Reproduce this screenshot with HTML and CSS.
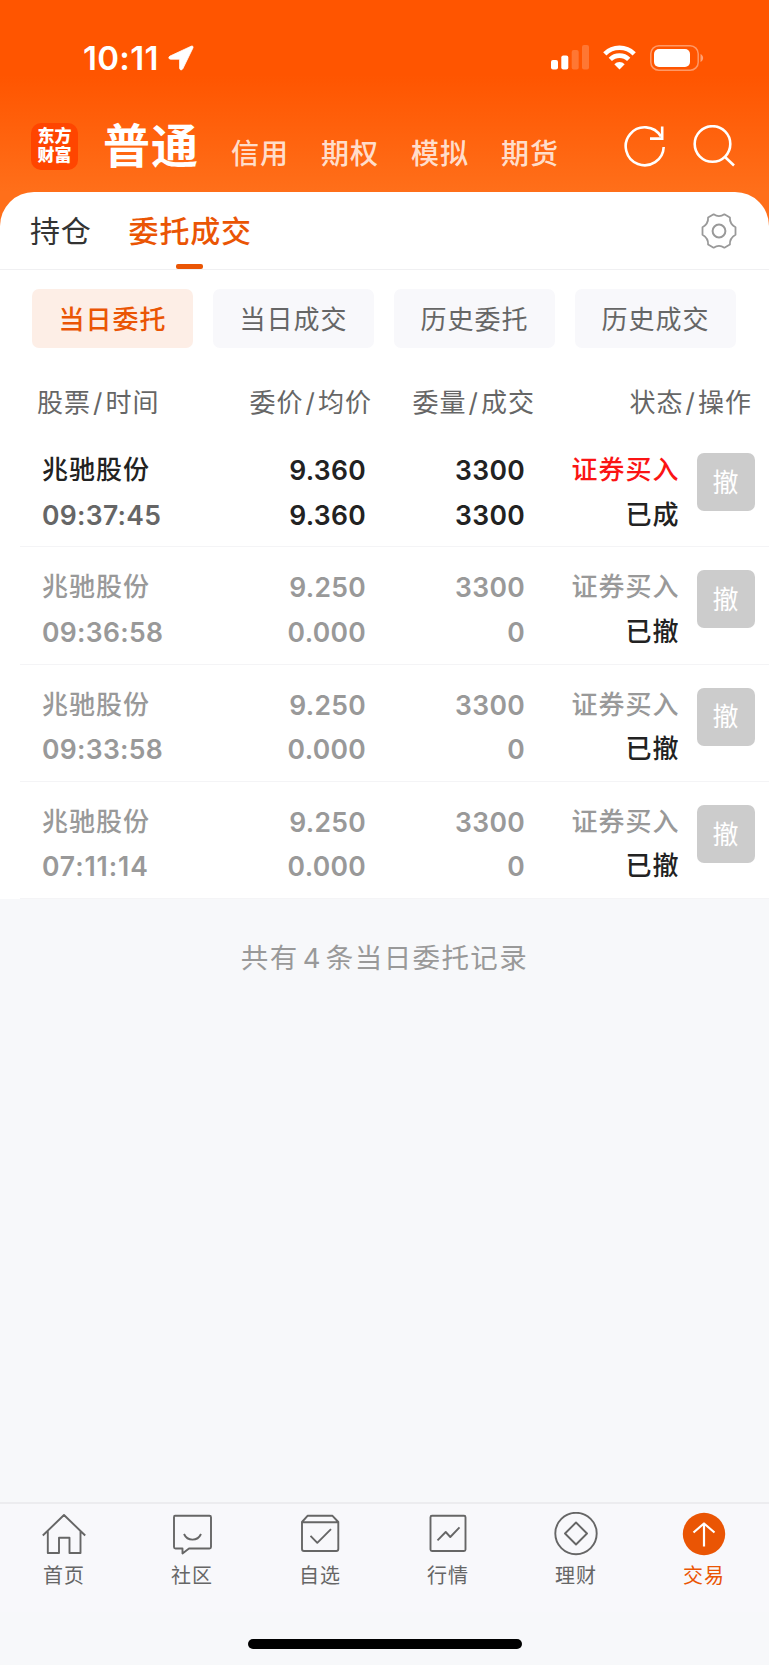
FILE: index.html
```html
<!DOCTYPE html>
<html lang="zh-CN">
<head>
    <meta charset="UTF-8">
    <meta name="viewport" content="width=device-width, initial-scale=1.0">
    <title>委托成交</title>
    <link rel="stylesheet" href="styles.css">
</head>
<body>
    <div class="app">
        <div class="top">
            <div class="status-bar">
                <span class="time">10:11</span>
                <svg class="location" width="26" height="26" viewBox="0 0 26 26"><path d="M23.2 1.2 2 11.1C.2 12 .6 14.200 2.500 14.200H11.600V23C11.600 25.200 14 25.500 14.800 23.800L24.900 3C25.500 1.500 24.600.6 23.200 1.200Z" fill="#fff" stroke="#fff" stroke-width=".8"/></svg>
                <div class="signals">
                    <svg width="38" height="25" viewBox="0 0 38 25" fill="#fff">
                        <rect x="0" y="15" width="7" height="9.500" rx="2"/>
                        <rect x="10.300" y="10.500" width="7" height="14" rx="2"/>
                        <rect x="20.700" y="5" width="7" height="19.500" rx="2" opacity=".2"/>
                        <rect x="31" y="0" width="7" height="24.500" rx="2" opacity=".2"/>
                    </svg>
                    <svg width="33" height="25" viewBox="0 0 33 25" fill="none" stroke="#fff" stroke-width="4.600">
                        <path d="M1.800 8.800A21 21 0 0 1 31.200 8.800"/>
                        <path d="M7.300 14.400A13 13 0 0 1 25.700 14.400"/>
                        <path d="M16.500 24.500 11.300 19.200A7.500 7.500 0 0 1 21.700 19.200Z" fill="#fff" stroke="none"/>
                    </svg>
                    <svg width="54" height="26" viewBox="0 0 54 26">
                        <rect x=".8" y=".8" width="47.400" height="24.400" rx="8" fill="none" stroke="#fff" stroke-width="1.500" opacity=".4"/>
                        <rect x="4" y="4" width="36" height="18" rx="5" fill="#fff"/>
                        <path d="M50.500 9C54 10.500 54 15.500 50.500 17Z" fill="#fff" opacity=".45"/>
                    </svg>
                </div>
            </div>
            <div class="account-bar">
                <div class="logo">东方<br>财富</div>
                <h1>普通</h1>
                <div class="accounts">
                    <span>信用</span>
                    <span>期权</span>
                    <span>模拟</span>
                    <span>期货</span>
                </div>
                <svg class="refresh" width="42" height="42" viewBox="0 0 42 42" fill="none" stroke="#fff" stroke-width="2.600">
                    <path d="M39.700 22A19 19 0 1 1 37 11.500"/>
                    <path d="M38.200 1.500V13.600H26"/>
                </svg>
                <svg class="search" width="42" height="42" viewBox="0 0 42 42" fill="none" stroke="#fff" stroke-width="2.600">
                    <circle cx="19.500" cy="19" r="17.800"/>
                    <path d="M31.500 31.500 41 40.500"/>
                </svg>
            </div>
        </div>

        <div class="sheet">
            <div class="tabs">
                <div class="tab">持仓</div>
                <div class="tab active">委托成交</div>
                <svg class="gear" width="36" height="36" viewBox="0 0 36 36" fill="none" stroke="#999" stroke-width="1.800" stroke-linejoin="round">
                    <path d="M12.600 1.300Q18 4.900 23.400 1.300L28.900 4.500Q28.500 10.800 34.500 14.300V21.700Q28.500 25.200 28.900 31.500L23.400 34.700Q18 31.100 12.600 34.700L7.100 31.500Q7.500 25.200 1.500 21.700V14.300Q7.500 10.800 7.100 4.500Z"/>
                    <circle cx="18" cy="18" r="6.400" stroke-width="2"/>
                </svg>
            </div>

            <div class="filters">
                <div class="filter active">当日委托</div>
                <div class="filter">当日成交</div>
                <div class="filter">历史委托</div>
                <div class="filter">历史成交</div>
            </div>

            <div class="list-header">
                <span>股票<i>/</i>时间</span>
                <span>委价<i>/</i>均价</span>
                <span>委量<i>/</i>成交</span>
                <span>状态<i>/</i>操作</span>
            </div>

            <div class="order done">
                <div class="name">兆驰股份<br><span class="num">09:37:45</span></div>
                <div class="num">9.360<br>9.360</div>
                <div class="num">3300<br>3300</div>
                <div class="state">证券买入<br><b>已成</b></div>
                <button class="cancel">撤</button>
            </div>
            <div class="order">
                <div class="name">兆驰股份<br><span class="num">09:36:58</span></div>
                <div class="num">9.250<br>0.000</div>
                <div class="num">3300<br>0</div>
                <div class="state">证券买入<br><b>已撤</b></div>
                <button class="cancel">撤</button>
            </div>
            <div class="order">
                <div class="name">兆驰股份<br><span class="num">09:33:58</span></div>
                <div class="num">9.250<br>0.000</div>
                <div class="num">3300<br>0</div>
                <div class="state">证券买入<br><b>已撤</b></div>
                <button class="cancel">撤</button>
            </div>
            <div class="order">
                <div class="name">兆驰股份<br><span class="num time-wide">07:11:14</span></div>
                <div class="num">9.250<br>0.000</div>
                <div class="num">3300<br>0</div>
                <div class="state">证券买入<br><b>已撤</b></div>
                <button class="cancel">撤</button>
            </div>
        </div>

        <p class="total">共有<span>4</span>条当日委托记录</p>

        <div class="nav">
            <div class="nav-item">
                <svg width="44" height="44" viewBox="0 0 44 44"><path d="M.8 23.500 22 3 43.200 23.500M5.800 19V41H17V25.700H27.500V41H38.500V19"/></svg>
                <span>首页</span>
            </div>
            <div class="nav-item">
                <svg width="44" height="44" viewBox="0 0 44 44"><path d="M5 3.800H39.500Q41 3.800 41 5.300V35Q41 36.500 39.500 36.500H19L12.500 41.500V36.500H5.500Q4 36.500 4 35V5.300Q4 3.800 5 3.800ZM14 22C17.500 29.500 27.500 29.500 31 22"/></svg>
                <span>社区</span>
            </div>
            <div class="nav-item">
                <svg width="44" height="44" viewBox="0 0 44 44"><path d="M9.500 3.800H34.500L40.300 10V37Q40.300 39 38.300 39H6Q4 39 4 37V10ZM4 10.300H40.300M12.500 23.800 19.300 30.800 33 17.200"/></svg>
                <span>自选</span>
            </div>
            <div class="nav-item">
                <svg width="44" height="44" viewBox="0 0 44 44"><rect x="4.500" y="3.800" width="35" height="35.200" rx="1.500"/><path d="M11.500 28.300 19.700 20 24.300 25 33.500 15.300"/></svg>
                <span>行情</span>
            </div>
            <div class="nav-item">
                <svg width="44" height="44" viewBox="0 0 44 44"><circle cx="22" cy="21.500" r="20.700"/><path d="M22 10.500 33 21.500 22 32.500 11 21.500Z"/></svg>
                <span>理财</span>
            </div>
            <div class="nav-item active">
                <svg width="44" height="44" viewBox="0 0 44 44"><circle class="fill" cx="22" cy="22" r="21.200"/><path d="M22 34.500V11.500M11.500 20.500 22 11.500 32.500 20.500"/></svg>
                <span>交易</span>
            </div>
        </div>
        <div class="home-indicator"></div>
    </div>
</body>
</html>
```
FILE: styles.css
```css
* {
    box-sizing: border-box;
}
body {
    margin: 0;
    font-family: Inter, 'Noto Sans CJK SC', sans-serif;
    background: #f7f8fa;
    color: #222;
}
.app {
    width: 769px;
    height: 1665px;
    display: flex;
    flex-direction: column;
    overflow: hidden;
}
.top {
    height: 232px;
    flex-shrink: 0;
    background: linear-gradient(#ff5500 0, #ff5500 75px, #ff6f1a 192px);
    color: #fff;
}
.status-bar {
    height: 115px;
    padding: 0 65px 0 83px;
    display: flex;
    align-items: center;
}
.time {
    font-size: 33px;
    font-weight: 600;
    letter-spacing: 0.3px;
}
.location {
    margin-left: 9px;
}
.signals {
    margin-left: auto;
    display: flex;
    align-items: center;
    gap: 14px;
}
.account-bar {
    height: 62px;
    padding: 0 34px 0 31px;
    display: flex;
    align-items: center;
}
.logo {
    width: 47px;
    height: 47px;
    padding-top: 4px;
    border-radius: 10px;
    background: #ff4500;
    font-size: 17px;
    font-weight: 900;
    line-height: 19.5px;
    text-align: center;
}
.account-bar h1 {
    width: 98px;
    margin: 0 0 0 25px;
    font-size: 47px;
    font-weight: 700;
    letter-spacing: 1px;
    line-height: 62px;
    white-space: nowrap;
}
.accounts {
    display: flex;
    gap: 32px;
    margin: 12px 0 0 30px;
    font-size: 28px;
    font-weight: 500;
    letter-spacing: 1px;
    color: rgba(255, 255, 255, 0.8);
}
.refresh {
    margin-left: auto;
}
.search {
    margin-left: 27px;
}
.sheet {
    margin-top: -40px;
    flex-shrink: 0;
    background: #fff;
    border-radius: 34px 34px 0 0;
}
.tabs {
    height: 78px;
    padding: 0 32px 0 30px;
    display: flex;
    align-items: center;
    border-bottom: 1px solid #f0f0f2;
}
.tab {
    height: 77px;
    font-size: 30px;
    line-height: 78px;
    letter-spacing: 0.8px;
    color: #333;
}
.tab.active {
    margin-left: 37px;
    color: #ea5504;
    font-weight: 500;
}
.tab.active::after {
    content: '';
    display: block;
    width: 27px;
    height: 5px;
    margin: -6px 0 0 47px;
    border-radius: 2px;
    background: #ea5504;
}
.gear {
    margin-left: auto;
}
.filters {
    display: grid;
    grid-template-columns: repeat(4, 161px);
    gap: 20px;
    padding: 19px 32px 0;
}
.filter {
    height: 59px;
    border-radius: 7px;
    background: #f8f8fb;
    color: #666;
    font-size: 26px;
    line-height: 62px;
    letter-spacing: 1px;
    text-align: center;
}
.filter.active {
    background: #fdeee6;
    color: #ea5504;
    font-weight: 500;
}
.list-header {
    height: 82px;
    padding: 27px 17px 0 37px;
    display: grid;
    grid-template-columns: 124px 211px 163px 1fr;
    font-size: 26px;
    line-height: 56px;
    letter-spacing: 1px;
    color: #666;
    white-space: nowrap;
    text-align: right;
}
.list-header span:first-child {
    text-align: left;
}
.list-header i {
    margin: 0 2px;
    font-style: normal;
}
.order {
    height: 117.3px;
    margin-left: 20px;
    padding: 18px 15px 0 22px;
    display: grid;
    grid-template-columns: 130px 194px 159px 154.5px 57.5px;
    justify-content: start;
    border-bottom: 1px solid #f4f4f6;
    font-size: 26px;
    font-weight: 500;
    line-height: 44.5px;
    letter-spacing: 1px;
    color: #999;
    text-align: right;
}
.num {
    font-size: 26.5px;
    font-weight: 600;
    letter-spacing: 0.3px;
}
.time-wide {
    letter-spacing: 0.9px;
}
.name {
    text-align: left;
}
.state b {
    font-weight: 500;
    color: #222;
}
.order.done {
    color: #222;
}
.done .name .num {
    color: #666;
}
.done .state {
    color: #fb1414;
}
.cancel {
    width: 58px;
    height: 58px;
    margin: 5px 0 0 17px;
    padding: 2px 0 0;
    border: none;
    border-radius: 7px;
    background: #ccc;
    color: #fff;
    font: inherit;
    font-weight: 400;
}
.total {
    margin: 37px 0 0;
    font-size: 27.5px;
    line-height: 44px;
    letter-spacing: 1.4px;
    color: #999;
    text-align: center;
}
.total span {
    margin: 0 4px;
}
.nav {
    height: 110px;
    margin-top: auto;
    padding-top: 8px;
    flex-shrink: 0;
    display: grid;
    grid-template-columns: repeat(6, 128px);
    border-top: 2px solid #ececef;
    background: #f8f8fb;
}
.nav-item {
    display: flex;
    flex-direction: column;
    align-items: center;
    font-size: 20px;
    line-height: 40px;
    letter-spacing: 1px;
    color: #666;
}
.nav-item svg {
    fill: none;
    stroke: #666;
    stroke-width: 1.9;
    stroke-linejoin: round;
}
.nav-item.active {
    color: #ea5504;
}
.nav-item.active svg {
    stroke: #fff;
    stroke-width: 2.2;
}
.nav-item .fill {
    fill: #ea5504;
    stroke: none;
}
.home-indicator {
    width: 274px;
    height: 10px;
    margin: 27px auto 16px;
    flex-shrink: 0;
    border-radius: 5px;
    background: #000;
}
```
